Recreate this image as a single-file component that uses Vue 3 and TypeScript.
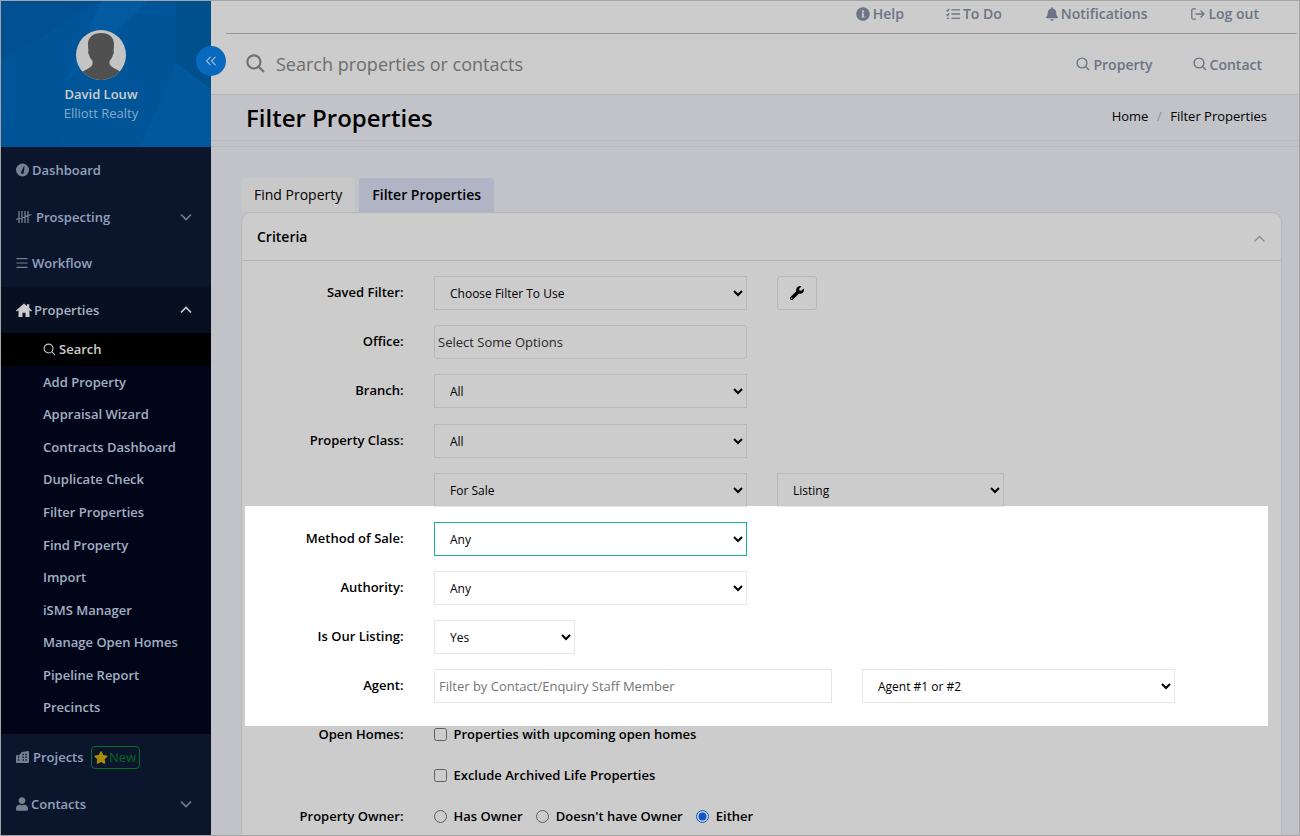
<script setup lang="ts">
interface Ico { vb: string; d: string; stroke?: boolean }
const icons: Record<string, Ico> = {
  dash: { vb: '0 0 16 16', d: 'M8 0a8 8 0 1 0 0 16A8 8 0 0 0 8 0zM6.600 12.600 6.200 11.400 9.400 3.600 10.600 4 9.300 12.400 7.700 13z' },
  tally: { vb: '0 0 16 14', d: 'M3 1v12M6 1v12M9 1v12M12 1v12M0 9.500 15.500 4.500', stroke: true },
  menu: { vb: '0 0 13 12', d: 'M.5 1.200h12M.5 6h12M.5 10.800h12', stroke: true },
  home: { vb: '0 0 16 14', d: 'M8 .5 0 7.500 .9 8.500 2.500 7.200V14H6.500V9.700H9.500V14H13.500V7.200L15.100 8.500 16 7.500 13.300 5.100V1.200H11V3.100Z' },
  city: { vb: '0 0 14 13', d: 'M0 4.500h4V3h1.500V1.500L13 0a1 1 0 0 1 1 1v11a1 1 0 0 1-1 1H1a1 1 0 0 1-1-1zM2 6v1.500h1.500V6zM2 9v1.500h1.500V9zM7 3v1.500h1.500V3zM10 3v1.500h1.500V3zM7 6v1.500h1.500V6zM10 6v1.500h1.500V6zM7 9v1.500h1.500V9zM10 9v1.500h1.500V9z' },
  user: { vb: '0 0 448 512', d: 'M224 256c70.7 0 128-57.3 128-128S294.7 0 224 0 96 57.3 96 128s57.3 128 128 128zm89.6 32h-16.7c-22.2 10.2-46.9 16-72.9 16s-50.6-5.8-72.9-16h-16.7C60.2 288 0 348.2 0 422.4V464c0 26.5 21.5 48 48 48h352c26.5 0 48-21.5 48-48v-41.6c0-74.2-60.2-134.4-134.4-134.4z' },
}
const topNav = [
  { label: 'Dashboard', icon: 'dash', w: 13, gap: 3 },
  { label: 'Prospecting', icon: 'tally', w: 16, gap: 4, chev: 'down' },
  { label: 'Workflow', icon: 'menu', w: 12, gap: 4 },
]
const subNav = ['Add Property', 'Appraisal Wizard', 'Contracts Dashboard', 'Duplicate Check', 'Filter Properties', 'Find Property', 'Import', 'iSMS Manager', 'Manage Open Homes', 'Pipeline Report', 'Precincts']
const sources = ['Choose Filter To Use']
</script>

<template>
  <div class="frame">
    <aside class="side">
      <div class="profile">
        <svg class="facets" viewBox="0 0 211 146" preserveAspectRatio="none" aria-hidden="true">
          <polygon points="100,0 147,0 65,82" fill="#0a80dc" opacity=".3" />
          <polygon points="176,0 211,0 211,88 176,62" fill="#005a90" opacity=".3" />
          <polygon points="176,62 211,88 211,146 140,146" fill="#0a80dc" opacity=".2" />
          <polygon points="0,0 100,0 0,60" fill="#0058a8" opacity=".25" />
          <polygon points="0,130 65,82 60,146 0,146" fill="#0058a8" opacity=".15" />
        </svg>
        <div class="avatar">
          <svg viewBox="0 0 50 50" aria-hidden="true">
            <path d="M25 3c-8 0-13 4.500-13 11 0 3 .3 5 .6 7-.9.600-.6 2.500.3 3.300.7 2.700 1.900 5 3.600 6.700v3.500c-.8 2.200-3.500 3.500-6 5-2 1.200-4.500 2-6.500 3.500L3 50h44l-1-7.500c-2-1.500-4.500-2.300-6.500-3.500-2.500-1.500-5.200-2.800-6-5V31c1.700-1.700 2.900-4 3.600-6.700.9-.8 1.200-2.700.3-3.300.3-2 .6-4 .6-7 0-6.500-5-11-13-11z" fill="#646464" />
          </svg>
        </div>
        <div class="pname">David Louw</div>
        <div class="porg">Elliott Realty</div>
      </div>

      <nav class="nav">
        <a v-for="n in topNav" :key="n.label" class="item">
          <svg class="nico" :class="{ st: icons[n.icon].stroke }" :style="{ width: n.w + 'px', marginRight: n.gap + 'px' }" :viewBox="icons[n.icon].vb"><path :d="icons[n.icon].d" /></svg>
          <span>{{ n.label }}</span>
          <svg v-if="n.chev" class="chev" viewBox="0 0 12 8"><path d="M1 1.500 6 6.500 11 1.500" /></svg>
        </a>
        <a class="item active">
          <svg class="nico" style="width: 16px; margin-right: 2px" :viewBox="icons.home.vb"><path :d="icons.home.d" /></svg>
          <span>Properties</span>
          <svg class="chev" viewBox="0 0 12 8"><path d="M1 6.500 6 1.500 11 6.500" /></svg>
        </a>
        <div class="sub">
          <a class="subitem current">
            <svg class="sico" viewBox="0 0 14 14"><circle cx="6" cy="6" r="4.800" /><path d="M9.500 9.500 13 13" /></svg>
            Search
          </a>
          <a v-for="s in subNav" :key="s" class="subitem">{{ s }}</a>
        </div>
        <a class="item">
          <svg class="nico" style="width: 13px; margin-right: 4px" :viewBox="icons.city.vb"><path :d="icons.city.d" fill-rule="evenodd" /></svg>
          <span>Projects</span>
          <span class="badge">
            <svg viewBox="0 0 576 512"><path d="M259.3 17.8L194 150.2 47.9 171.5c-26.2 3.8-36.7 36.1-17.7 54.6l105.7 103-25 145.5c-4.5 26.3 23.2 46 46.4 33.7L288 439.6l130.7 68.7c23.2 12.2 50.9-7.4 46.4-33.7l-25-145.5 105.7-103c19-18.5 8.5-50.8-17.7-54.6L382 150.2 316.7 17.8c-11.7-23.6-45.6-23.9-57.4 0z" /></svg>New
          </span>
        </a>
        <a class="item">
          <svg class="nico" style="width: 12px; margin-right: 3px" :viewBox="icons.user.vb"><path :d="icons.user.d" /></svg>
          <span>Contacts</span>
          <svg class="chev" viewBox="0 0 12 8"><path d="M1 1.500 6 6.500 11 1.500" /></svg>
        </a>
      </nav>
    </aside>

    <button class="collapse" aria-label="Collapse">
      <svg viewBox="0 0 12 10"><path d="M5.500 .8 1.500 5l4 4.200M10.500 .8 6.500 5l4 4.200" /></svg>
    </button>

    <main class="main">
      <header class="topbar">
        <div class="links">
          <a class="tl">
            <svg class="ti" viewBox="0 0 512 512"><path d="M256 8C119.043 8 8 119.083 8 256c0 136.997 111.043 248 248 248s248-111.003 248-248C504 119.083 392.957 8 256 8zm0 110c23.196 0 42 18.804 42 42s-18.804 42-42 42-42-18.804-42-42 18.804-42 42-42zm56 254c0 6.627-5.373 12-12 12h-88c-6.627 0-12-5.373-12-12v-24c0-6.627 5.373-12 12-12h12v-64h-12c-6.627 0-12-5.373-12-12v-24c0-6.627 5.373-12 12-12h64c6.627 0 12 5.373 12 12v100h12c6.627 0 12 5.373 12 12v24z" /></svg>Help
          </a>
          <a class="tl">
            <svg class="ti line" viewBox="0 0 14 12"><path d="M.5 2 1.500 3 3.300 .8M.5 6.500 1.500 7.500 3.300 5.300M5.500 1.800h8.500M5.500 6h8.500M5.500 10.300h8.500M.8 10.300h2" /></svg>To Do
          </a>
          <a class="tl wide">
            <svg class="ti bell" viewBox="0 0 448 512"><path d="M224 512c35.32 0 63.97-28.65 63.97-64H160.03c0 35.35 28.65 64 63.97 64zm215.39-149.71c-19.32-20.76-55.47-51.99-55.47-154.29 0-77.7-54.48-139.9-127.94-155.16V32c0-17.67-14.32-32-31.98-32s-31.98 14.33-31.98 32v20.84C118.56 68.1 64.08 130.3 64.08 208c0 102.3-36.15 133.53-55.47 154.29-6 6.45-8.66 14.16-8.61 21.71.11 16.4 12.98 32 32.1 32h383.8c19.12 0 32-15.6 32.1-32 .05-7.55-2.61-15.27-8.61-21.71z" /></svg>Notifications
          </a>
          <a class="tl last">
            <svg class="ti line" viewBox="0 0 14 12"><path d="M5 .8H2A1.300 1.300 0 0 0 .8 2v8A1.300 1.300 0 0 0 2 11.200h3M4.500 6h8.500M9.500 2.500 13 6 9.500 9.500" /></svg>Log out
          </a>
        </div>
        <div class="searchrow">
          <svg class="bigsearch" viewBox="0 0 18 18"><circle cx="7.500" cy="7.500" r="6.200" /><path d="M12 12l5 5" /></svg>
          <input class="bigin" placeholder="Search properties or contacts" />
          <a class="sl"><svg class="si" viewBox="0 0 14 14"><circle cx="6" cy="6" r="4.900" /><path d="M9.500 9.500 13 13" /></svg>Property</a>
          <a class="sl"><svg class="si" viewBox="0 0 14 14"><circle cx="6" cy="6" r="4.900" /><path d="M9.500 9.500 13 13" /></svg>Contact</a>
        </div>
      </header>

      <div class="heading">
        <h1>Filter Properties</h1>
        <div class="crumbs"><a>Home</a><i>/</i><a>Filter Properties</a></div>
      </div>

      <section class="content">
        <div class="tabs">
          <a class="tab">Find Property</a>
          <a class="tab on">Filter Properties</a>
        </div>
        <div class="card">
          <div class="cardhead">
            <span>Criteria</span>
            <svg viewBox="0 0 12 8"><path d="M1 6.500 6 1.500 11 6.500" /></svg>
          </div>
          <div class="form">
            <div class="row">
              <label>Saved Filter:</label>
              <select class="sel w313"><option v-for="o in sources" :key="o">{{ o }}</option></select>
              <button class="tool" aria-label="Settings">
                <svg viewBox="0 0 512 512"><path d="M507.73 109.1c-2.24-9.03-13.54-12.09-20.12-5.51l-74.36 74.36-67.88-11.31-11.31-67.88 74.36-74.36c6.62-6.62 3.43-17.9-5.66-20.16-47.38-11.74-99.55.91-136.58 37.93-39.64 39.64-50.55 97.1-34.05 147.2L18.74 402.76c-24.99 24.99-24.99 65.51 0 90.5 24.99 24.99 65.51 24.99 90.5 0l213.21-213.21c50.12 16.71 107.47 5.68 147.37-34.22 37.07-37.07 49.7-89.32 37.91-136.73zM64 472c-13.25 0-24-10.75-24-24 0-13.26 10.75-24 24-24s24 10.74 24 24c0 13.25-10.75 24-24 24z" /></svg>
              </button>
            </div>
            <div class="row">
              <label>Office:</label>
              <div class="chosen">Select Some Options</div>
            </div>
            <div class="row">
              <label>Branch:</label>
              <select class="sel w313"><option>All</option></select>
            </div>
            <div class="row">
              <label>Property Class:</label>
              <select class="sel w313"><option>All</option></select>
            </div>
            <div class="row">
              <label></label>
              <select class="sel w313"><option>For Sale</option></select>
              <select class="sel w227"><option>Listing</option></select>
            </div>
            <div class="row">
              <label>Method of Sale:</label>
              <select class="sel w313 focus"><option>Any</option></select>
            </div>
            <div class="row">
              <label>Authority:</label>
              <select class="sel w313"><option>Any</option></select>
            </div>
            <div class="row">
              <label>Is Our Listing:</label>
              <select class="sel w141"><option>Yes</option></select>
            </div>
            <div class="row">
              <label>Agent:</label>
              <input class="agent" placeholder="Filter by Contact/Enquiry Staff Member" />
              <select class="sel w313"><option>Agent #1 or #2</option></select>
            </div>
            <div class="row slim">
              <label>Open Homes:</label>
              <span class="check"><input type="checkbox" />Properties with upcoming open homes</span>
            </div>
            <div class="row slim">
              <label></label>
              <span class="check"><input type="checkbox" />Exclude Archived Life Properties</span>
            </div>
            <div class="row slim">
              <label>Property Owner:</label>
              <span class="check"><input type="radio" name="owner" />Has Owner</span>
              <span class="check"><input type="radio" name="owner" />Doesn't have Owner</span>
              <span class="check"><input type="radio" name="owner" checked />Either</span>
            </div>
          </div>
        </div>
      </section>
    </main>

    <div class="spotlight"></div>
  </div>
</template>

<style>
html, body { margin: 0; padding: 0; overflow: hidden; }
</style>

<style scoped>
.frame {
  position: relative;
  width: 1300px;
  height: 836px;
  box-sizing: border-box;
  border: 1px solid #a4a4a4;
  display: flex;
  overflow: hidden;
  background: #f3f4fa;
  font-family: "Open Sans", "Noto Sans", sans-serif;
  font-size: 13px;
  color: #000;
}
.side { width: 210px; flex: none; background: #0e1c39; display: flex; flex-direction: column; }
.profile {
  position: relative;
  height: 146px;
  padding-right: 10px;
  background: #006bc0;
  display: flex;
  flex-direction: column;
  align-items: center;
  overflow: hidden;
}
.facets { position: absolute; inset: 0; width: 100%; height: 100%; }
.avatar {
  position: relative;
  width: 50px;
  height: 50px;
  margin-top: 29px;
  border-radius: 50%;
  background: #f5f5f5;
  overflow: hidden;
}
.avatar svg { display: block; width: 50px; height: 50px; }
.pname { position: relative; margin-top: 5px; font-weight: 600; line-height: 19px; color: #fff; }
.porg { position: relative; line-height: 19px; color: #a9d3f4; }
.nav { display: flex; flex-direction: column; }
.item {
  height: 46.5px;
  display: flex;
  align-items: center;
  padding: 0 19px 0 15px;
  font-weight: 600;
  color: #b9c8e6;
}
.item.active { background: #091429; color: #d4dff2; }
.nico { flex: none; height: 14px; fill: #94a0b6; }
.active .nico { fill: #fff; }
.nico.st { fill: none; stroke: #94a0b6; stroke-width: 1.300; }
.chev { width: 12px; height: 8px; margin-left: auto; fill: none; stroke: #8e9cb6; stroke-width: 1.700; }
.active .chev { stroke: #fff; }
.sub { height: 401px; box-sizing: border-box; background: #00081e; display: flex; flex-direction: column; }
.subitem {
  height: 32.55px;
  flex: none;
  display: flex;
  align-items: center;
  padding-left: 42px;
  font-weight: 600;
  color: #cddaf2;
}
.subitem.current { background: #000; color: #fff; }
.sico { width: 13px; height: 13px; margin-right: 3px; fill: none; stroke: #fff; stroke-width: 1.200; }
.badge {
  margin-left: 7px;
  height: 21px;
  width: 47px;
  box-sizing: content-box;
  border: 1px solid #0a8a2a;
  border-radius: 4px;
  display: flex;
  align-items: center;
  justify-content: center;
  font-weight: 400;
  color: #0a7f28;
}
.badge svg { width: 14px; height: 13px; fill: #d4b106; margin-right: 1px; }
.collapse {
  position: absolute;
  left: 195px;
  top: 45px;
  width: 30px;
  height: 30px;
  padding: 0;
  border: 0;
  border-radius: 50%;
  background: #0a84ee;
  display: flex;
  align-items: center;
  justify-content: center;
  z-index: 2;
}
.collapse svg { width: 12px; height: 10px; fill: none; stroke: #d8ebfb; stroke-width: 1.100; }
.main { flex: 1; min-width: 0; display: flex; flex-direction: column; }
.topbar { background: #fff; padding-left: 15px; }
.links {
  height: 32px;
  box-sizing: content-box;
  margin-right: 2px;
  border-bottom: 1px solid #bdbdbd;
  display: flex;
  justify-content: flex-end;
  align-items: flex-start;
  gap: 42px;
  padding-right: 38px;
  line-height: 25px;
}
.tl, .sl { display: flex; align-items: center; font-size: 14px; font-weight: 600; color: #8792a8; }
.tl.wide { margin-left: 2px; }
.tl.last { margin-left: 2px; }
.ti { width: 14px; height: 14px; margin-right: 3px; fill: #8792a8; }
.ti.bell { width: 12px; }
.ti.line { fill: none; stroke: #8792a8; stroke-width: 1.300; }
.searchrow { height: 60px; display: flex; align-items: center; padding-right: 37px; }
.bigsearch { width: 19px; height: 19px; margin-left: 20px; margin-top: -1px; fill: none; stroke: #8c8c8c; stroke-width: 2; flex: none; }
.bigin {
  flex: 1;
  min-width: 0;
  margin-left: 11px;
  padding: 0;
  border: 0;
  outline: 0;
  background: transparent;
  font: 18px "Open Sans", sans-serif;
}
.bigin::placeholder { color: #8a8a8a; opacity: 1; }
.sl { margin-left: 40px; }
.si { width: 14px; height: 14px; margin-right: 3px; fill: none; stroke: #8792a8; stroke-width: 1.400; }
.heading {
  height: 47px;
  padding: 0 32px 0 35px;
  border-top: 1px solid #e4e5ea;
  border-bottom: 1px solid #e4e5ea;
  box-sizing: border-box;
  display: flex;
  align-items: center;
  justify-content: space-between;
}
h1 { margin: 0; font-size: 24px; font-weight: 600; color: #000; }
.crumbs { display: flex; align-items: center; font-size: 13px; margin-top: -4px; }
.crumbs i { font-style: normal; color: #b4b4b4; margin: 0 8.500px; }
.content { flex: 1; min-height: 0; margin-top: 5px; border-top: 1px solid #e4e5ea; padding: 31px 17px 0 30px; }
.tabs { display: flex; gap: 4px; }
.tab {
  height: 34px;
  box-sizing: border-box;
  padding: 0 13px 2px;
  display: flex;
  align-items: center;
  font-size: 14px;
  border-radius: 4px 4px 0 0;
  background: #fbfbfb;
}
.tab.on { background: #dce1f5; font-weight: 600; }
.card { border: 1px solid #e4e5ea; border-radius: 10px 10px 0 0; background: #fff; }
.cardhead {
  height: 48px;
  box-sizing: border-box;
  border-bottom: 1px solid #e0e1e5;
  display: flex;
  align-items: center;
  justify-content: space-between;
  padding: 0 15px;
  font-size: 14px;
  font-weight: 600;
}
.cardhead svg { width: 13px; height: 8px; margin-top: 5px; fill: none; stroke: #b0b0b0; stroke-width: 1.300; }
.form { padding: 15.25px 0 40px; display: flex; flex-direction: column; gap: 15.1px; }
.row { display: flex; align-items: flex-start; min-height: 34px; }
.row label {
  width: 161.500px;
  flex: none;
  margin-right: 30.500px;
  text-align: right;
  font-weight: 600;
  line-height: 32px;
  color: #000;
}
.sel {
  height: 34px;
  box-sizing: border-box;
  padding: 1px 11px 0;
  border: 1px solid #e5e6e7;
  border-radius: 0;
  background: #fff;
  font: 12px "Open Sans", sans-serif;
  color: #000;
  outline: 0;
}
.w313 { width: 313px; }
.w227 { width: 227px; margin-left: 30px; }
.w141 { width: 141px; }
.focus { border-color: #1ab394; }
.tool {
  width: 40px;
  height: 34px;
  margin-left: 30px;
  padding: 0;
  border: 1px solid #e5e6e7;
  border-radius: 3px;
  background: #fff;
  display: flex;
  align-items: center;
  justify-content: center;
}
.tool svg { width: 14px; height: 14px; fill: #000; }
.chosen {
  width: 313px;
  height: 34px;
  box-sizing: border-box;
  border: 1px solid #e5e6e7;
  border-radius: 3px;
  padding-left: 3px;
  font-size: 13px;
  line-height: 32px;
  color: #333;
}
.agent {
  width: 398px;
  height: 34px;
  box-sizing: border-box;
  margin-right: 30px;
  padding: 0 4px;
  border: 1px solid #e5e6e7;
  outline: 0;
  font: 13px "Open Sans", sans-serif;
}
.agent::placeholder { color: #757575; opacity: 1; }
.row.slim { min-height: 26px; height: 26px; }
.row.slim label { line-height: 32px; }
.check { display: flex; align-items: center; height: 32px; font-weight: 600; margin-right: 13.500px; }
.check input { width: 13px; height: 13px; margin: 0 6.500px 0 0; accent-color: #0d6efd; }
.spotlight {
  position: absolute;
  left: 244px;
  top: 505px;
  width: 1023px;
  height: 220px;
  box-shadow: 0 0 0 3000px rgba(0, 0, 0, 0.2);
  z-index: 5;
  pointer-events: none;
}
</style>
